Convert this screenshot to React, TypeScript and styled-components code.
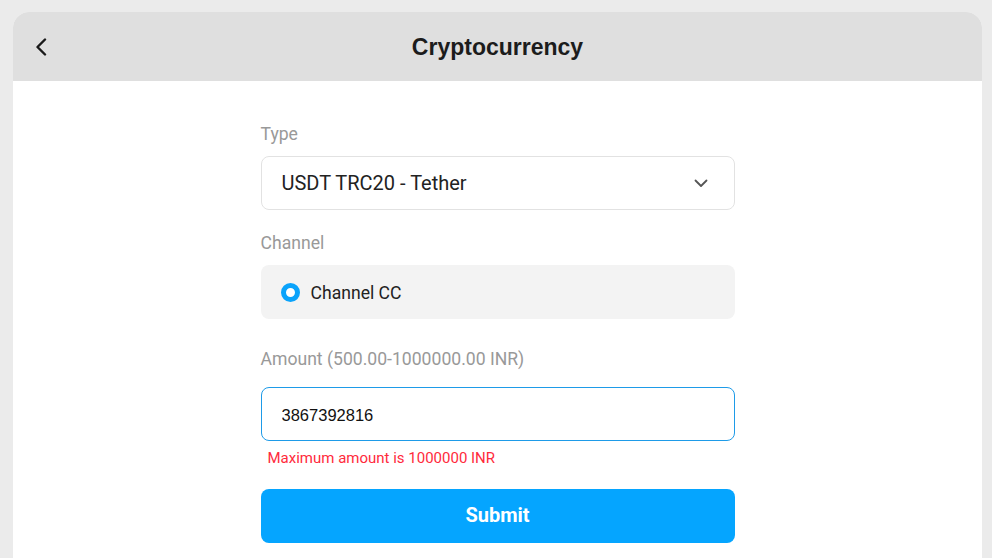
import React, { useState } from "react";
import styled, { createGlobalStyle } from "styled-components";

const GlobalStyle = createGlobalStyle`
  html, body {
    margin: 0;
    padding: 0;
    background: #ebebeb;
    font-family: Roboto, "Noto Sans", sans-serif;
  }
  * {
    box-sizing: border-box;
  }
`;

const Card = styled.div`
  margin: 12px 10px 0 13px;
  min-height: calc(100vh - 12px);
  background: #fff;
  border-radius: 16px 16px 0 0;
  overflow: hidden;
`;

const Header = styled.div`
  height: 69px;
  background: #dfdfdf;
  display: grid;
  grid-template-columns: 1fr auto 1fr;
  align-items: center;
  padding: 1px 22px 0 22px;
`;

const BackButton = styled.button`
  justify-self: start;
  width: 24px;
  height: 24px;
  padding: 0;
  border: none;
  background: none;
  display: flex;
  align-items: center;
  justify-content: flex-start;
  cursor: pointer;
`;

const Title = styled.h1`
  margin: 0;
  font-family: "Liberation Sans", Arial, sans-serif;
  font-size: 23px;
  font-weight: 700;
  color: #1c1c1c;
`;

const Form = styled.div`
  width: 474px;
  margin: 0 auto;
  padding-top: 40px;
  display: flex;
  flex-direction: column;
`;

const Label = styled.div<{ $gap: number }>`
  font-size: 17.6px;
  line-height: 24px;
  padding-top: 1px;
  color: #999;
  margin-bottom: ${(p) => p.$gap - 1}px;
`;

const Select = styled.div`
  height: 54px;
  border: 1px solid #e2e2e2;
  border-radius: 8px;
  display: flex;
  align-items: center;
  justify-content: space-between;
  padding: 0 26px 0 20px;
  font-size: 20px;
  color: #222;
  margin-bottom: 20px;
  cursor: pointer;
`;

const ChannelBox = styled.div`
  height: 54px;
  background: #f3f3f3;
  border-radius: 8px;
  display: flex;
  align-items: center;
  gap: 11px;
  padding: 1px 20px 0;
  font-size: 17.6px;
  color: #222;
  margin-bottom: 27px;
`;

const Radio = styled.span`
  width: 19px;
  height: 19px;
  border-radius: 50%;
  border: 5px solid #0aa3fb;
  background: #fff;
  flex: none;
`;

const AmountInput = styled.input`
  height: 54px;
  border: 1px solid #1e9be8;
  border-radius: 8px;
  padding: 3px 20px 0;
  font-family: "Liberation Sans", Arial, sans-serif;
  font-size: 16.5px;
  color: #111;
  outline: none;
`;

const ErrorText = styled.div`
  margin: 7px 0 0 7px;
  font-size: 15px;
  line-height: 20px;
  color: #ff2a3c;
`;

const SubmitButton = styled.button`
  margin-top: 21px;
  height: 54px;
  border: none;
  border-radius: 8px;
  background: #05a5ff;
  color: #fff;
  font-family: Roboto, sans-serif;
  font-size: 20px;
  font-weight: 700;
  padding: 0 0 3px;
  cursor: pointer;
`;

const App: React.FC = () => {
  const [amount, setAmount] = useState("3867392816");

  return (
    <>
      <GlobalStyle />
      <Card>
        <Header>
          <BackButton aria-label="back">
            <svg width="12" height="18" viewBox="0 0 12 18" fill="none">
              <path
                d="M10 1.5 L2.5 9 L10 16.5"
                stroke="#1a1a1a"
                strokeWidth="2.4"
                strokeLinecap="round"
                strokeLinejoin="round"
              />
            </svg>
          </BackButton>
          <Title>Cryptocurrency</Title>
        </Header>
        <Form>
          <Label $gap={11}>Type</Label>
          <Select>
            <span>USDT TRC20 - Tether</span>
            <svg width="14" height="9" viewBox="0 0 14 9" fill="none">
              <path
                d="M1.5 1.5 L7 7 L12.5 1.5"
                stroke="#555"
                strokeWidth="1.8"
                strokeLinecap="round"
                strokeLinejoin="round"
              />
            </svg>
          </Select>
          <Label $gap={11}>Channel</Label>
          <ChannelBox>
            <Radio />
            Channel CC
          </ChannelBox>
          <Label $gap={17}>Amount (500.00-1000000.00 INR)</Label>
          <AmountInput
            value={amount}
            onChange={(e) => setAmount(e.target.value)}
          />
          <ErrorText>Maximum amount is 1000000 INR</ErrorText>
          <SubmitButton>Submit</SubmitButton>
        </Form>
      </Card>
    </>
  );
};

export default App;
